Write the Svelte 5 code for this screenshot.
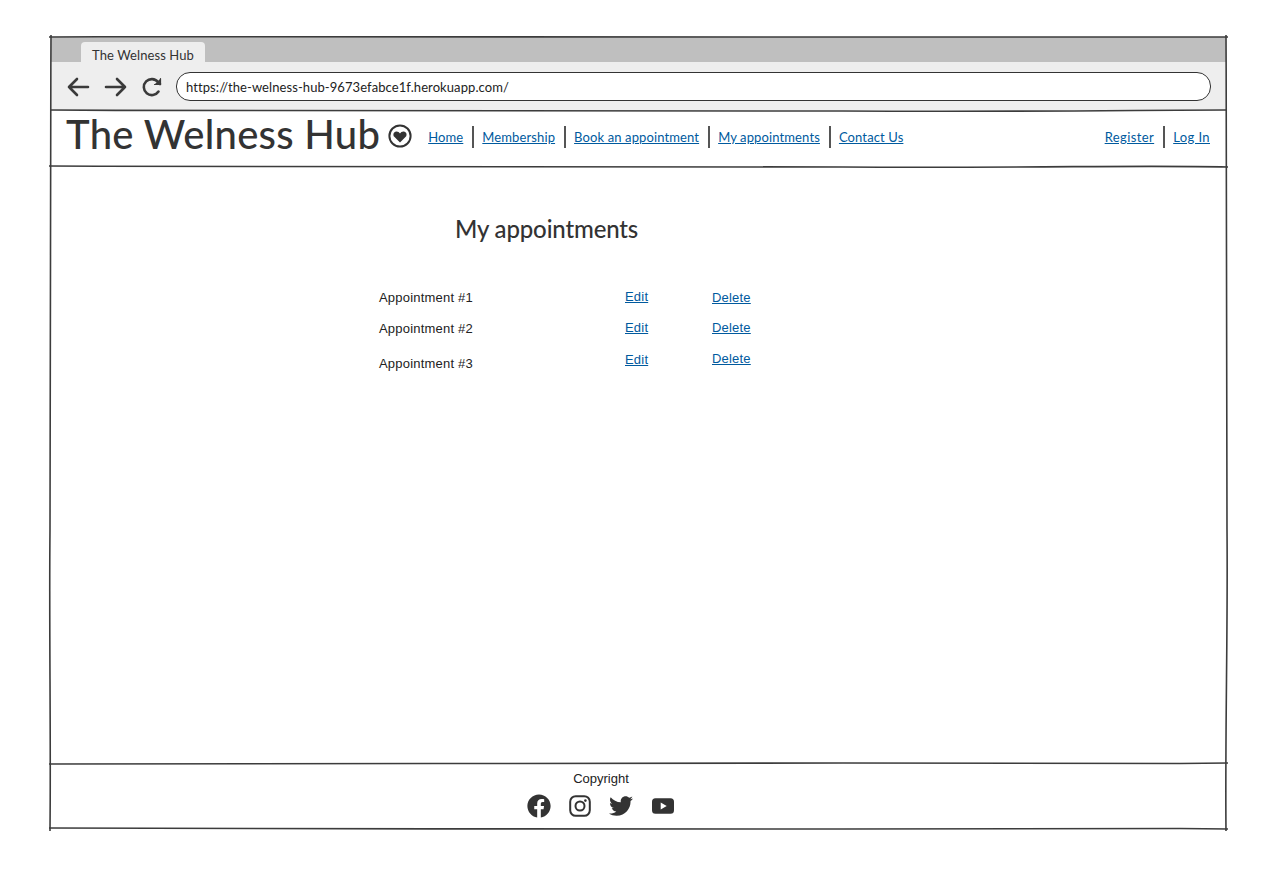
<script>
  const navLinks = ["Home", "Membership", "Book an appointment", "My appointments", "Contact Us"];
  const authLinks = ["Register", "Log In"];
  const appointments = [
    { name: "Appointment #1", row: "r1" },
    { name: "Appointment #2", row: "r2" },
    { name: "Appointment #3", row: "r3" }
  ];
</script>

<div class="page">
  <div class="frame">
    <svg class="sketch" width="1190" height="806" viewBox="0 0 1190 806" fill="none" stroke="#3c3c3c" stroke-width="1.6">
      <path d="M6 8 C300 6 600 7 800 8 S1100 7 1185 8" />
      <path d="M8 6 C7 200 8 400 7 500 S8 700 7 802" />
      <path d="M1183 6 C1184 200 1183 400 1184 500 S1182 700 1183 802" />
      <path d="M8 81 C300 83 600 81 800 82 S1100 81 1183 81" />
      <path d="M6 137 C300 139 600 137 800 138 S1100 136 1185 138" />
      <path d="M6 735 C300 736 500 733 800 734 S1100 735 1185 734" />
      <path d="M6 799 C300 799 500 801 800 800 S1100 799 1185 800" />
    </svg>

    <div class="tabstrip">
      <div class="tab">The Welness Hub</div>
    </div>
    <div class="toolbar">
      <svg class="tool" width="24" height="24" viewBox="0 0 24 24" fill="none" stroke="#3a3a3a" stroke-width="2.6" stroke-linecap="round" stroke-linejoin="round">
        <path d="M22 12H3M11 4l-8 8 8 8" />
      </svg>
      <svg class="tool" width="24" height="24" viewBox="0 0 24 24" fill="none" stroke="#3a3a3a" stroke-width="2.6" stroke-linecap="round" stroke-linejoin="round">
        <path d="M2 12h19M13 4l8 8-8 8" />
      </svg>
      <svg class="tool" width="22" height="22" viewBox="0 0 22 22" fill="none" stroke="#3a3a3a" stroke-width="2.6" stroke-linecap="round" stroke-linejoin="round">
        <path d="M17.500 15.500A8 8 0 1 1 17 6l2 2" />
        <path d="M19.500 2.500v6h-6" fill="#3a3a3a" stroke-width="1.2" />
      </svg>
      <div class="address">https://the-welness-hub-9673efabce1f.herokuapp.com/</div>
    </div>

    <header>
      <div class="brand">The Welness Hub</div>
      <svg class="heart" width="24" height="24" viewBox="0 0 24 24">
        <circle cx="12" cy="12" r="10.600" fill="none" stroke="#333" stroke-width="2" />
        <path d="M12 18.600 6.300 12.800C4.600 11 5.500 7.600 8.300 7.400 10 7.300 11.200 8.200 12 9.400 12.800 8.200 14 7.300 15.700 7.400 18.500 7.600 19.400 11 17.700 12.800Z" fill="#333" />
      </svg>
      <nav>
        {#each navLinks as link}
          <a href="#top">{link}</a>
        {/each}
      </nav>
      <div class="auth">
        {#each authLinks as link}
          <a href="#top">{link}</a>
        {/each}
      </div>
    </header>

    <main>
      <h1>My appointments</h1>
      <div class="list">
        {#each appointments as item}
          <div class="item {item.row}">
            <span class="name">{item.name}</span>
            <a class="edit" href="#top">Edit</a>
            <a class="delete" href="#top">Delete</a>
          </div>
        {/each}
      </div>
    </main>

    <footer>
      <div class="copy">Copyright</div>
      <div class="social">
        <svg width="24" height="24" viewBox="0 0 512 512" fill="#333">
          <path d="M504 256C504 119 393 8 256 8S8 119 8 256c0 123.780 90.690 226.380 209.250 245V327.690h-63V256h63v-54.640c0-62.150 37-96.480 93.670-96.480 27.140 0 55.520 4.840 55.520 4.840v61h-31.280c-30.800 0-40.410 19.120-40.410 38.730V256h68.780l-11 71.690h-57.780V501C413.310 482.380 504 379.780 504 256z" />
        </svg>
        <svg width="22" height="22" viewBox="0 0 22 22" fill="none" stroke="#333" stroke-width="2">
          <rect x="1.200" y="1.200" width="19.600" height="19.600" rx="5.500" />
          <circle cx="11" cy="11" r="4.500" />
          <circle cx="16.400" cy="5.600" r="1.300" fill="#333" stroke="none" />
        </svg>
        <svg width="24" height="24" viewBox="0 0 512 512" fill="#333">
          <path d="M459.370 151.716c.325 4.548.325 9.097.325 13.645 0 138.720-105.583 298.558-298.558 298.558-59.452 0-114.680-17.219-161.137-47.106 8.447.974 16.568 1.299 25.340 1.299 49.055 0 94.213-16.568 130.274-44.832-46.132-.975-84.792-31.188-98.112-72.772 6.498.974 12.995 1.624 19.818 1.624 9.421 0 18.843-1.300 27.614-3.573-48.081-9.747-84.143-51.980-84.143-102.985v-1.299c13.969 7.797 30.214 12.670 47.431 13.319-28.264-18.843-46.781-51.005-46.781-87.391 0-19.492 5.197-37.360 14.294-52.954 51.655 63.675 129.300 105.258 216.365 109.807-1.624-7.797-2.599-15.918-2.599-24.040 0-57.828 46.782-104.934 104.934-104.934 30.213 0 57.502 12.670 76.670 33.137 23.715-4.548 46.456-13.320 66.599-25.340-7.798 24.366-24.366 44.833-46.132 57.827 21.117-2.273 41.584-8.122 60.426-16.243-14.292 20.791-32.161 39.308-52.628 54.253z" />
        </svg>
        <svg width="24" height="24" viewBox="0 0 24 24">
          <path fill="#333" fill-rule="evenodd" d="M4.500 4.300h15A3.500 3.500 0 0 1 23 7.800v8.400a3.500 3.500 0 0 1-3.500 3.500h-15A3.500 3.500 0 0 1 1 16.200V7.800a3.500 3.500 0 0 1 3.500-3.500ZM9.700 8.600v6.800l6-3.400Z" />
        </svg>
      </div>
    </footer>
  </div>
</div>

<style>
  :global(body) {
    margin: 0;
    background: #fff;
    color: #333;
  }

  .page {
    padding: 29px 0 0 43px;
    height: 844px;
    box-sizing: border-box;
  }

  .frame {
    position: relative;
    width: 1191px;
    padding: 8px 8px 0 8px;
    box-sizing: border-box;
  }

  .sketch {
    position: absolute;
    top: 0;
    left: 0;
    z-index: 1;
    pointer-events: none;
  }

  .tabstrip {
    height: 25px;
    background: #bfbfbf;
    padding: 5px 0 0 30px;
    box-sizing: border-box;
  }

  .tab {
    width: 124px;
    height: 20px;
    background: #eee;
    border-radius: 4px 4px 0 0;
    font: 13px/26px "Lato", sans-serif;
    color: #333;
    text-align: center;
    letter-spacing: 0.1px;
  }

  .toolbar {
    height: 48px;
    background: #eee;
    display: flex;
    align-items: center;
    padding: 1px 15px 0 15px;
    box-sizing: border-box;
  }

  .tool {
    margin-right: 14px;
    flex: none;
  }

  .tool:nth-child(3) {
    margin-right: 13px;
    margin-left: -1px;
  }

  .address {
    flex: 1;
    height: 29px;
    box-sizing: border-box;
    background: #fff;
    border: 1.6px solid #333;
    border-radius: 14px;
    padding-left: 9px;
    font: 13px/28px "Lato", sans-serif;
    letter-spacing: 0.08px;
    color: #222;
  }

  header {
    height: 56px;
    display: flex;
    align-items: center;
    padding: 0 16px 0 15px;
  }

  .brand {
    font: 500 40px/48px "Lato", sans-serif;
    letter-spacing: 0.27px;
    color: #333;
    margin-top: -8px;
    white-space: nowrap;
  }

  .heart {
    margin: -4px 16px 0 8px;
    flex: none;
  }

  nav,
  .auth {
    display: flex;
    align-items: center;
    margin-top: -2px;
  }

  nav a,
  .auth a {
    font: 13px/22px "Lato", sans-serif;
    letter-spacing: 0.12px;
    color: #005a9e;
    text-decoration: underline;
    padding: 0 9px 0 8px;
    border-left: 2px solid #555;
    white-space: nowrap;
  }

  nav a:first-child,
  .auth a:first-child {
    border-left: 0;
  }

  nav a:first-child {
    padding-left: 0;
  }

  .auth {
    margin-left: auto;
  }

  .auth a {
    letter-spacing: 0.4px;
  }

  .auth a:last-child {
    padding-right: 0;
  }

  main {
    height: 596px;
    padding: 47px 0 0 328px;
    box-sizing: border-box;
  }

  h1 {
    font: 500 24px/32px "Lato", sans-serif;
    letter-spacing: -0.15px;
    color: #333;
    margin: 0 0 45px 76px;
  }

  .list {
    display: flex;
    flex-direction: column;
    font: 13px/16px "Liberation Sans", sans-serif;
    width: 400px;
  }

  .item {
    display: grid;
    grid-template-columns: 246px 87px auto;
    justify-content: start;
  }

  .item a {
    color: #005a9e;
    text-decoration: underline;
    letter-spacing: 0.2px;
  }

  .name {
    color: #222;
    letter-spacing: 0.2px;
  }

  .r1 {
    height: 31px;
  }

  .r1 .edit {
    margin-top: -1px;
  }

  .r2 {
    height: 32px;
  }

  .r2 .edit,
  .r2 .delete {
    margin-top: -1px;
  }

  .r3 .name {
    margin-top: 3px;
  }

  .r3 .edit {
    margin-top: -1px;
  }

  .r3 .delete {
    margin-top: -2px;
  }

  footer {
    height: 66px;
    display: flex;
    flex-direction: column;
    align-items: center;
    padding: 9px 0 0 0;
    box-sizing: border-box;
  }

  .copy {
    font: 13px/16px "Liberation Sans", sans-serif;
    color: #222;
    margin-right: 75px;
  }

  .social {
    display: flex;
    align-items: center;
    gap: 18px;
    margin: 7px 76px 0 0;
  }
</style>
